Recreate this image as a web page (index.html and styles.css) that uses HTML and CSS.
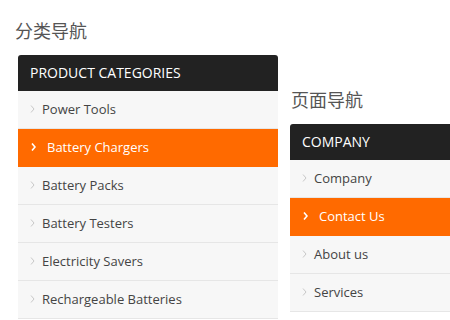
FILE: index.html
```html
<!DOCTYPE html>
<html>
<head>
<meta charset="utf-8">
<link rel="stylesheet" href="styles.css">
</head>
<body>
<div class="page">
  <section class="col col-left">
    <h2 class="title">分类导航</h2>
    <div class="panel">
      <div class="panel-head">PRODUCT CATEGORIES</div>
      <ul class="menu">
        <li class="item"><svg class="chev" viewBox="0 0 5 8"><path d="M1 0.5 L4 4 L1 7.5"/></svg>Power Tools</li>
        <li class="item active"><svg class="chev" viewBox="0 0 5 8"><path d="M1 0.5 L4 4 L1 7.5"/></svg>Battery Chargers</li>
        <li class="item"><svg class="chev" viewBox="0 0 5 8"><path d="M1 0.5 L4 4 L1 7.5"/></svg>Battery Packs</li>
        <li class="item"><svg class="chev" viewBox="0 0 5 8"><path d="M1 0.5 L4 4 L1 7.5"/></svg>Battery Testers</li>
        <li class="item"><svg class="chev" viewBox="0 0 5 8"><path d="M1 0.5 L4 4 L1 7.5"/></svg>Electricity Savers</li>
        <li class="item"><svg class="chev" viewBox="0 0 5 8"><path d="M1 0.5 L4 4 L1 7.5"/></svg>Rechargeable Batteries</li>
      </ul>
    </div>
  </section>
  <section class="col col-right">
    <h2 class="title">页面导航</h2>
    <div class="panel">
      <div class="panel-head">COMPANY</div>
      <ul class="menu">
        <li class="item"><svg class="chev" viewBox="0 0 5 8"><path d="M1 0.5 L4 4 L1 7.5"/></svg>Company</li>
        <li class="item active"><svg class="chev" viewBox="0 0 5 8"><path d="M1 0.5 L4 4 L1 7.5"/></svg>Contact Us</li>
        <li class="item"><svg class="chev" viewBox="0 0 5 8"><path d="M1 0.5 L4 4 L1 7.5"/></svg>About us</li>
        <li class="item"><svg class="chev" viewBox="0 0 5 8"><path d="M1 0.5 L4 4 L1 7.5"/></svg>Services</li>
      </ul>
    </div>
  </section>
</div>
</body>
</html>
```
FILE: styles.css
```css
html, body {
  margin: 0;
  padding: 0;
  background: #fff;
  overflow: hidden;
}
.page {
  display: flex;
  align-items: flex-start;
  gap: 12px;
  padding-left: 18px;
  width: 450px;
  height: 320px;
  box-sizing: border-box;
  overflow: hidden;
  font-family: "Open Sans", "Noto Sans CJK SC", sans-serif;
}
.col {
  width: 260px;
  flex: none;
}
.col-left { padding-top: 18px; }
.col-right { padding-top: 87px; }
.title {
  margin: 0 0 13px -3px;
  font-family: "Noto Sans CJK SC", sans-serif;
  font-size: 18px;
  line-height: 24px;
  font-weight: 400;
  color: #555;
}
.col-right .title { margin-left: 1px; }
.panel-head {
  background: #222;
  color: #fff;
  height: 36px;
  line-height: 36px;
  padding-left: 12px;
  font-size: 14px;
  border-radius: 3px 3px 0 0;
}
.menu {
  list-style: none;
  margin: 0;
  padding: 0;
}
.item {
  box-sizing: border-box;
  height: 38px;
  padding-bottom: 1px;
  border-bottom: 1px solid #e6e6e6;
  background: #f7f7f7;
  color: #444;
  font-size: 13px;
  padding-left: 12px;
  display: flex;
  align-items: center;
}
.chev {
  flex: none;
  width: 5px;
  height: 8px;
  margin-right: 7px;
  fill: none;
  stroke: #c8c8c8;
  stroke-width: 1;
}
.item.active {
  background: #ff6a00;
  color: #fff;
  border-bottom-color: #ff6a00;
}
.item.active .chev {
  stroke: #fff;
  stroke-width: 1.6;
  margin-left: 1px;
  margin-right: 11px;
}
```
